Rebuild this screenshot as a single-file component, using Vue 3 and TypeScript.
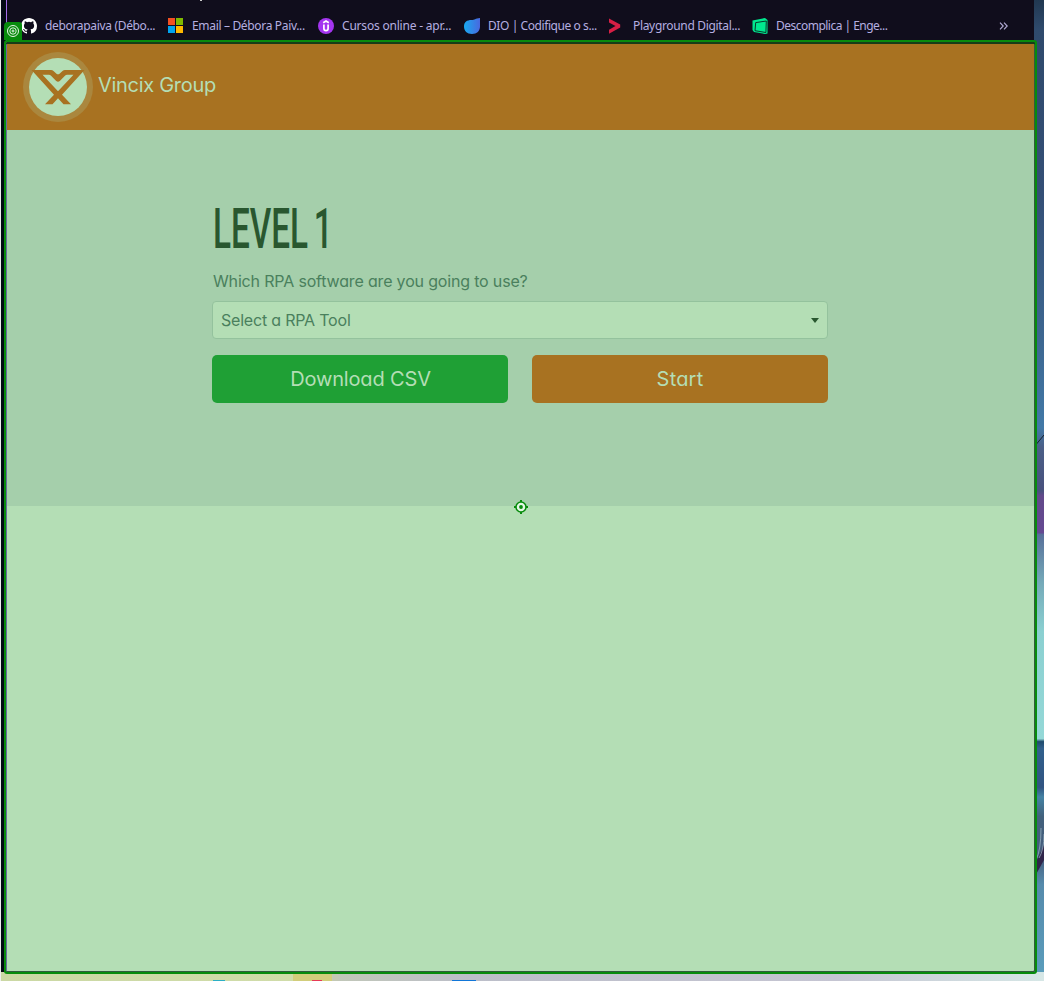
<script setup lang="ts">
interface Bookmark {
  icon: string
  label: string
}

const bookmarks: Bookmark[] = [
  { icon: 'github', label: 'deborapaiva (Débo...' },
  { icon: 'microsoft', label: 'Email – Débora Paiv...' },
  { icon: 'udemy', label: 'Cursos online - apr...' },
  { icon: 'dio', label: 'DIO | Codifique o s...' },
  { icon: 'chevron', label: 'Playground Digital...' },
  { icon: 'descomplica', label: 'Descomplica | Enge...' },
]
</script>

<template>
  <div class="desktop">
    <div class="browser">
      <nav class="bookmarks">
        <a v-for="b in bookmarks" :key="b.icon" class="bookmark" :class="'b-' + b.icon">
          <svg v-if="b.icon === 'github'" viewBox="0 0 16 16" width="16" height="16">
            <path fill="#fff" d="M8 0C3.58 0 0 3.58 0 8c0 3.54 2.29 6.53 5.47 7.59.4.07.55-.17.55-.38v-1.49c-2.01.37-2.53-.49-2.69-.94-.09-.23-.48-.94-.82-1.13-.28-.15-.68-.52-.01-.53.63-.01 1.08.58 1.23.82.72 1.21 1.87.87 2.33.66.07-.52.28-.87.51-1.07-1.78-.2-3.64-.89-3.64-3.95 0-.87.31-1.59.82-2.15-.08-.2-.36-1.02.08-2.12 0 0 .67-.21 2.2.82a7.5 7.5 0 0 1 4 0c1.53-1.04 2.2-.82 2.2-.82.44 1.1.16 1.92.08 2.12.51.56.82 1.27.82 2.15 0 3.07-1.87 3.75-3.65 3.95.29.25.54.73.54 1.48v2.2c0 .21.15.46.55.38A8 8 0 0 0 16 8c0-4.42-3.58-8-8-8z" />
          </svg>
          <svg v-else-if="b.icon === 'microsoft'" viewBox="0 0 16 16" width="16" height="16">
            <path fill="#f25022" d="M0 0h7v7H0z" /><path fill="#7fba00" d="M8 0h7v7H8z" />
            <path fill="#00a4ef" d="M0 8h7v7H0z" /><path fill="#ffb900" d="M8 8h7v7H8z" />
          </svg>
          <svg v-else-if="b.icon === 'udemy'" viewBox="0 0 16 16" width="16" height="16">
            <circle cx="8" cy="8" r="8" fill="#a435f0" />
            <path d="M5.200 4.800 8 3.100l2.800 1.700M5.900 6.500v4a2.100 2.100 0 0 0 4.200 0v-4" fill="none" stroke="#fff" stroke-width="1.700" />
          </svg>
          <svg v-else-if="b.icon === 'dio'" viewBox="0 0 16 16" width="16" height="16">
            <defs><linearGradient id="drop"><stop stop-color="#18a9f0" /><stop offset="1" stop-color="#4a68df" /></linearGradient></defs>
            <path fill="url(#drop)" d="M16 0v8.5C16 13 13 16 8 16c-5 0-8-3-8-7.500S3 2 7.500 2C11 2 11 .5 16 0z" />
          </svg>
          <svg v-else-if="b.icon === 'chevron'" viewBox="0 0 16 16" width="16" height="16">
            <path fill="#d71f45" d="M1 .5 12.200 6.500v3L1 15.800v-4L7.500 8 1 4.500z" />
          </svg>
          <svg v-else viewBox="0 0 16 16" width="16" height="16">
            <path fill="#00e88f" d="M.5 2.500 13 0l2.500 2v13.500L13 16 2 14 .5 12z" />
            <path fill="#00e88f" stroke="#08251f" stroke-width=".9" d="M3.700 4.600 14.300 3l-.4 11.500L3 12.700z" />
          </svg>
          <span class="label">{{ b.label }}</span>
        </a>
        <svg class="more" viewBox="0 0 9 8" width="9" height="8"><path d="m1 .7 3.200 3.300L1 7.300M5 .7l3.200 3.300L5 7.300" fill="none" stroke="#b0a9d2" stroke-width="1.200" /></svg>
        <i class="tab-mark"></i>
      </nav>

      <header class="brand">
        <svg class="logo" viewBox="0 0 70 70" width="70" height="70">
          <circle cx="35" cy="35" r="35" fill="#aa873e" />
          <circle cx="35" cy="35" r="29" fill="#b4deb5" />
          <path fill="#a87221" fill-rule="evenodd" d="M8.500 18H28q1.500 0 2.500 1l3 2.700q1.500 1 3 0l3-2.700q1-1 2.500-1h19.500L39 42.800l9 9.400h-7.500L35 46.200l-5.500 6H22l9-9.400zM19.500 22.700 35 39.200l15.500-16.500H44q-1 0-1.800.8l-5.400 5.400q-1.800 1.500-3.600 0l-5.400-5.400q-.8-.8-1.800-.8z" />
        </svg>
        <span class="brand-name">Vincix Group</span>
      </header>

      <main class="panel">
        <h1><span>LEVEL 1</span></h1>
        <label class="question">Which RPA software are you going to use?</label>
        <div class="select">
          <span>Select a RPA Tool</span>
          <i class="caret"></i>
        </div>
        <div class="actions">
          <button class="download">Download CSV</button>
          <button class="start">Start</button>
        </div>
      </main>
    </div>

    <div class="taskbar"><i class="t-yellow"></i><i class="t-cyan"></i><i class="t-red"></i><i class="t-blue"></i></div>

    <svg class="wallpaper" viewBox="0 0 10 972" width="10" height="972" preserveAspectRatio="none">
      <defs>
        <linearGradient id="sky" x2="0" y2="1">
          <stop stop-color="#213851" /><stop offset=".03" stop-color="#2f4a6c" /><stop offset=".2" stop-color="#344f76" />
          <stop offset=".35" stop-color="#3d6791" /><stop offset=".44" stop-color="#4279a7" /><stop offset=".46" stop-color="#4b5f87" />
          <stop offset=".505" stop-color="#48517d" /><stop offset=".51" stop-color="#62498a" /><stop offset=".548" stop-color="#654992" />
          <stop offset=".55" stop-color="#58709a" /><stop offset=".6" stop-color="#75aab9" /><stop offset=".65" stop-color="#8bd0d1" />
          <stop offset=".76" stop-color="#94d8d7" /><stop offset=".763" stop-color="#204b6d" /><stop offset=".77" stop-color="#31608c" />
          <stop offset=".81" stop-color="#315481" /><stop offset=".82" stop-color="#4583a4" /><stop offset=".84" stop-color="#42617c" />
          <stop offset=".88" stop-color="#455c7c" /><stop offset=".91" stop-color="#568bac" /><stop offset="1" stop-color="#5a9cbb" />
        </linearGradient>
      </defs>
      <path fill="url(#sky)" d="M0 0h10v972H0z" />
      <path d="m0 447 10-12" stroke="#15202d" />
      <path d="M10 845v15L0 878v-12z" fill="#30264b" />
      <path d="M2 860q5-10 5-32M5 858q5-8 5-24" fill="none" stroke="#a1bac9" stroke-width=".7" />
    </svg>

    <div class="selection"></div>
    <div class="anchor-tag">
      <svg viewBox="0 0 12 12" width="12" height="12" fill="none" stroke="#e5f5e6"><circle cx="6" cy="6" r="5.500" /><circle cx="6" cy="6" r="3.200" /><circle cx="6" cy="6" r="1" /></svg>
    </div>
    <svg class="target" viewBox="0 0 14 14" width="14" height="14">
      <circle cx="7" cy="7" r="5" fill="#e4f7e5" stroke="#078b0c" stroke-width="1.500" />
      <circle cx="7" cy="7" r="1.900" fill="#078b0c" />
      <path d="M7 0v2M7 12v2M0 7h2M12 7h2" stroke="#078b0c" stroke-width="2" />
    </svg>
  </div>
</template>

<style>
body { margin: 0; overflow: hidden; }
</style>

<style scoped>
.desktop { position: relative; width: 1044px; height: 981px; overflow: hidden; background: #030a14; font-family: Inter, "Noto Sans", sans-serif; box-shadow: inset 1px 0 #eee; }
.browser { width: 1028px; height: 972px; margin-left: 6px; background: #b4deb5; box-sizing: border-box; border-left: 1px solid #6d6c9d; }
.bookmarks { position: relative; display: flex; align-items: center; height: 44px; padding: 8px 0 0 14px; box-sizing: border-box; background: #100d1c; box-shadow: -1px 0 #a56de8; }
.bookmark { display: flex; align-items: center; gap: 8px; height: 20px; flex: none; }
.b-github { width: 147px; }
.b-microsoft { width: 150px; }
.b-udemy { width: 146px; }
.b-dio { width: 144px; }
.b-chevron { width: 144px; gap: 9px; }
.b-descomplica { width: 140px; }
.bookmark svg { flex: none; }
.label { font: 12px/16px "Noto Sans", "Open Sans", sans-serif; color: #b5afe0; white-space: nowrap; letter-spacing: -.2px; }
.b-github .label, .b-microsoft .label, .b-chevron .label { letter-spacing: -.33px; }
.b-dio .label { letter-spacing: -.42px; }
.b-descomplica .label { letter-spacing: -.52px; }
.more { position: absolute; left: 992px; top: 22px; }
.tab-mark { position: absolute; left: 193px; top: 0; width: 2px; height: 1px; background: #ccc; }
.brand { display: flex; align-items: center; gap: 5px; height: 86px; padding-left: 16px; background: #a87221; box-sizing: border-box; }
.brand-name { margin-bottom: 4px; font-size: 20px; line-height: 28px; letter-spacing: -.3px; color: #b4deb5; font-feature-settings: "cv11"; }
.panel { height: 376px; padding: 70px 206px 0 205px; box-sizing: border-box; background: #a5cfab; color: #4a805d; font-feature-settings: "cv11"; }
h1 { margin: 0; height: 58px; padding-left: 1px; font: 500 55px/58px Roboto, sans-serif; color: #29572f; white-space: nowrap; }
h1 span { display: inline-block; word-spacing: -4px; transform: scaleX(.605); transform-origin: 0 50%; }
.question { display: block; margin-top: 11px; padding-left: 1px; height: 24px; font-size: 16px; line-height: 24px; letter-spacing: -.17px; white-space: nowrap; }
.select { display: flex; align-items: center; justify-content: space-between; margin-top: 8px; width: 616px; height: 38px; padding: 0 8px 0 8px; box-sizing: border-box; border: 1px solid #94c29d; border-radius: 4px; background: #b4deb5; font-size: 16px; letter-spacing: -.2px; }
.caret { border: 4px solid transparent; border-top: 5px solid #29572f; border-bottom: 0; }
.actions { display: grid; grid-template-columns: 296px 296px; gap: 24px; margin-top: 16px; width: 616px; }
button { height: 48px; padding: 0; border: 0; border-radius: 5px; color: #b4deb5; font: 20px/30px Inter, sans-serif; font-feature-settings: "cv11"; }
.download { padding-left: 1px; letter-spacing: -.15px; background: #1fa035; }
.start { letter-spacing: .2px; background: #a87221; }
.taskbar { position: absolute; left: 1px; top: 972px; width: 1043px; height: 9px; background: linear-gradient(90deg, #cbd8a4, #d0dca9 28%, #c1c7b8 32%, #bcbec9 45%, #c5c5d2 80%, #d6e7e6); }
.taskbar i { position: absolute; }
.t-yellow { left: 292px; top: 0; width: 39px; height: 9px; background: #d2cd7b; border-right: 6px solid #c3c8b4; }
.t-cyan { left: 212px; top: 8px; width: 12px; height: 1px; background: #2cafc5; }
.t-red { left: 311px; top: 8px; width: 10px; height: 1px; background: #e63a55; }
.t-blue { left: 451px; top: 8px; width: 24px; height: 1px; background: #1176d8; }
.wallpaper { position: absolute; left: 1034px; top: 0; }
.selection { position: absolute; left: 4px; top: 40px; width: 1033px; height: 934px; box-sizing: border-box; border: 2px solid #078b0c; border-radius: 3px; box-shadow: inset 0 2px #173c18, inset -1px -1px #315b3d; }
.anchor-tag { position: absolute; left: 4px; top: 22px; width: 18px; height: 18px; background: #078b0c; border-radius: 4px 3px 0 0; }
.anchor-tag svg { position: absolute; left: 3px; top: 3px; }
.target { position: absolute; left: 514px; top: 500px; }
</style>
